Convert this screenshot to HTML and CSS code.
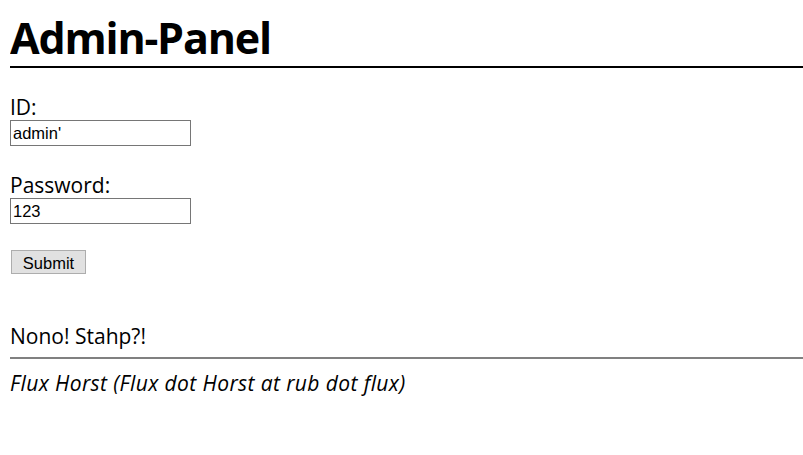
FILE: index.html
```html
<!DOCTYPE html>
<html lang="en">
<head>
  <meta charset="UTF-8" />
  <title>Admin-Panel</title>
  <link rel="stylesheet" href="styles.css">
</head>
<body>

<h1 class="title">Admin-Panel</h1>

<form class="login">
  <label for="id">ID:</label>
  <input type="text" id="id" value="admin'" />

  <label for="pw">Password:</label>
  <input type="text" id="pw" value="123" />

  <button type="submit">Submit</button>
</form>

<p class="message">Nono! Stahp?!</p>

<hr class="rule">

<footer>Flux Horst (Flux dot Horst at rub dot flux)</footer>

</body>
</html>
```

FILE: styles.css
```css
body {
  font-family: 'Open Sans', 'Noto Sans', sans-serif;
  font-size: 21px;
  color: #000;
  background: #fff;
  margin: 0 0 0 10px;
}
.title {
  font-size: 43px;
  letter-spacing: -1.2px;
  font-weight: bold;
  margin: 10px 0 0;
  line-height: 56px;
  border-bottom: 2px solid #000;
}
.login {
  margin-top: 26px;
}
label {
  display: block;
  line-height: 26px;
}
input {
  display: block;
  width: 181px;
  height: 26px;
  box-sizing: border-box;
  border: 1px solid #767676;
  padding: 0 2px;
  margin: 0 0 26px;
  font-family: 'Liberation Sans', Arial, sans-serif;
  font-size: 16.5px;
}
button {
  display: block;
  margin: 3px 0 0 1px;
  width: 75px;
  height: 24px;
  background: #e1e1e1;
  border: 1px solid #adadad;
  border-radius: 0;
  font-family: 'Liberation Sans', Arial, sans-serif;
  font-size: 16.5px;
  padding: 2px 0 0;
}
.message {
  margin: 49px 0 0;
  line-height: 26px;
}
.rule {
  border: none;
  border-top: 2px solid #808080;
  margin: 8px 0 0;
}
footer {
  font-style: italic;
  letter-spacing: 0.4px;
  margin-top: 11px;
  line-height: 26px;
}
```
